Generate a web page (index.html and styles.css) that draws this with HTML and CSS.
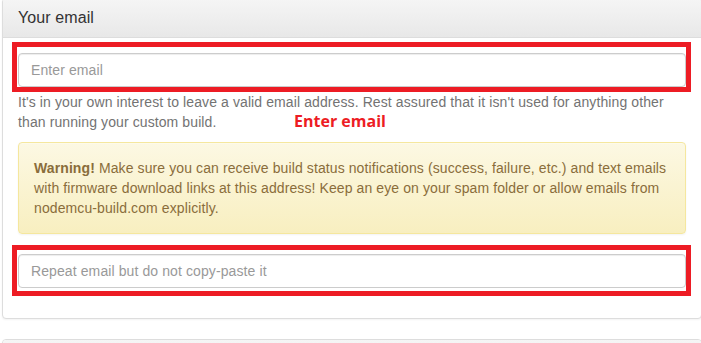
FILE: index.html
```html
<!DOCTYPE html>
<html lang="en">
<head>
  <meta charset="UTF-8">
  <meta name="viewport" content="width=device-width, initial-scale=1.0">
  <link rel="stylesheet" href="styles.css">
</head>
<body>
  <div class="panel">
    <div class="panel-heading">
      <h3 class="panel-title">Your email</h3>
    </div>
    <div class="panel-body">
      <div class="form-group">
        <div class="field">
          <input type="email" class="form-control" placeholder="Enter email">
          <span class="marker marker-first"></span>
        </div>
        <p class="help-block">It's in your own interest to leave a valid email address. Rest assured that it isn't used for anything other than running your custom build.</p>
        <span class="note">Enter email</span>
        <div class="alert">
          <strong>Warning!</strong> Make sure you can receive build status notifications (success, failure, etc.) and text emails with firmware download links at this address! Keep an eye on your spam folder or allow emails from nodemcu-build.com explicitly.
        </div>
        <div class="field">
          <input type="email" class="form-control" placeholder="Repeat email but do not copy-paste it">
          <span class="marker marker-second"></span>
        </div>
      </div>
    </div>
  </div>

  <div class="panel">
    <div class="panel-heading"></div>
  </div>
</body>
</html>
```

FILE: styles.css
```css
body {
  margin: 0;
  padding: 0 0 0 2px;
  font-family: 'Liberation Sans', Arial, sans-serif;
  font-size: 14px;
  line-height: 20px;
  letter-spacing: 0.1px;
  color: #333;
  background: #fff;
}

.panel {
  margin: -2px -1px 20px 0;
  background: #fff;
  border: 1px solid #ddd;
  border-radius: 4px;
  box-shadow: 0 1px 2px rgba(0, 0, 0, 0.05);
}

.panel + .panel {
  margin-top: 0;
}

.panel-heading {
  min-height: 18px;
  padding: 10px 15px;
  border-bottom: 1px solid #ddd;
  border-radius: 3px 3px 0 0;
  background: linear-gradient(to bottom, #f5f5f5 0%, #e8e8e8 100%);
}

.panel-title {
  margin: 0;
  font-size: 16px;
  font-weight: normal;
  line-height: 18px;
  color: #333;
}

.panel-body {
  padding: 15px;
}

.form-group {
  position: relative;
  margin-bottom: 15px;
}

.field {
  position: relative;
}

.form-control {
  display: block;
  width: 100%;
  height: 34px;
  box-sizing: border-box;
  padding: 6px 12px;
  font-family: inherit;
  font-size: 14px;
  letter-spacing: 0.1px;
  color: #555;
  background: #fff;
  border: 1px solid #ccc;
  border-radius: 4px;
  box-shadow: inset 0 1px 1px rgba(0, 0, 0, 0.075);
}

.form-control::placeholder {
  color: #999;
}

.marker {
  position: absolute;
  border: 5px solid #ed1c24;
  pointer-events: none;
}

.marker-first {
  top: -11px;
  left: -6px;
  right: -5px;
  bottom: -5px;
}

.marker-second {
  top: -9px;
  left: -6px;
  right: -5px;
  bottom: -8px;
}

.help-block {
  margin: 5px 0 10px;
  color: #737373;
}

.note {
  position: absolute;
  top: 58px;
  left: 276px;
  font-family: 'Open Sans', sans-serif;
  font-size: 16px;
  font-weight: bold;
  letter-spacing: 0;
  color: #ed1c24;
}

.alert {
  margin-bottom: 20px;
  padding: 15px;
  color: #8a6d3b;
  border: 1px solid #f5e79e;
  border-radius: 4px;
  background: linear-gradient(to bottom, #fcf8e3 0%, #f8efc0 100%);
  box-shadow: inset 0 1px 0 rgba(255, 255, 255, 0.25), 0 1px 2px rgba(0, 0, 0, 0.05);
}

.alert strong {
  font-weight: bold;
}
```
